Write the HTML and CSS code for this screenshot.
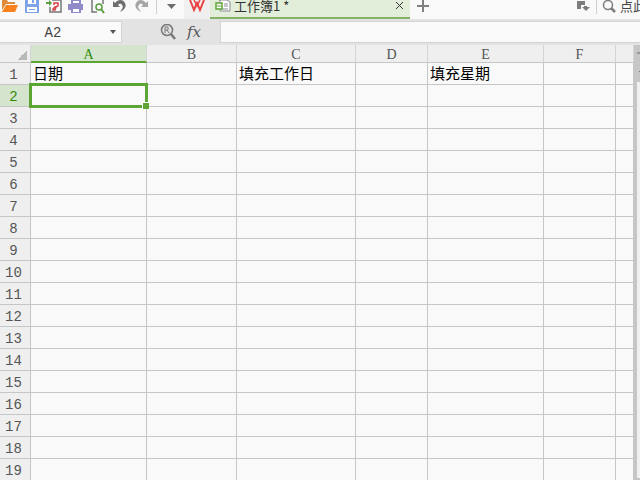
FILE: index.html
```html
<!DOCTYPE html>
<html lang="zh-CN">
<head>
    <meta charset="UTF-8">
    <meta name="viewport" content="width=device-width, initial-scale=1.0">
    <title>工作簿1</title>
    <link rel="stylesheet" href="styles.css">
</head>
<body>
    <header class="toolbar">
        <div class="quick-access">
            <button class="icon-button" aria-label="打开">
                <svg viewBox="0 0 16 16"><path d="M0 10V0h5l1 2h7v2H4z" fill="#e08a3c"/><path d="M4 5h12l-3 7H0z" fill="#f9821f"/></svg>
            </button>
            <button class="icon-button" aria-label="保存">
                <svg viewBox="0 0 16 16"><path d="M1 0h14v13H1z" fill="#7da3e8"/><path d="M4 0h8v4H4zM3 7h10v5H3z" fill="#fff"/><path d="M8 0h2v3H8zM5 9h6v1H5z" fill="#7da3e8"/></svg>
            </button>
            <button class="icon-button" aria-label="输出为PDF">
                <svg viewBox="0 0 16 16" fill="none"><path d="M6 0h9v12H4V7" stroke="#777" stroke-width="1.5"/><path d="M0 2h3V0l3 3-3 3V4H0z" fill="#5a9e3d"/><path d="M8 5V3h4v3L9 7 7 9v1h2l1-3" stroke="#d9434a" stroke-width="1.5"/></svg>
            </button>
            <button class="icon-button" aria-label="打印">
                <svg viewBox="0 0 16 16"><path d="M3 0h10v4h2v6H0V4h3z" fill="#8f8bc9"/><path d="M5 1h6v2H5z" fill="#fff"/><path d="M3 8h10v5H3z" fill="#8f8bc9"/><path d="M5 9h6v3H5z" fill="#fff"/></svg>
            </button>
            <button class="icon-button" aria-label="打印预览">
                <svg viewBox="0 0 16 16" fill="none"><path d="M7 12H2V0M13 0v4" stroke="#777" stroke-width="1.5"/><circle cx="9" cy="7" r="3" stroke="#5a9e3d" stroke-width="1.5"/><path d="M11 9l3 4" stroke="#5a9e3d" stroke-width="2"/></svg>
            </button>
            <button class="icon-button" aria-label="撤销">
                <svg viewBox="0 0 16 16"><path d="M1 1l2 2c3-4 8-4 10 0 2 4-1 7-5 9 2-3 4-5 2-7-1-2-3-1-4 0l2 2H1z" fill="#6e6e6e"/></svg>
            </button>
            <button class="icon-button" aria-label="恢复">
                <svg viewBox="0 0 16 16"><path d="M14 1l-2 2C9-1 4-1 2 3c-2 4 1 7 5 9-2-3-4-5-2-7 1-2 3-1 4 0L7 7h7z" fill="#a6a6a6"/></svg>
            </button>
            <span class="separator"></span>
            <button class="icon-button" aria-label="自定义">
                <svg viewBox="0 0 16 16"><path d="M4 4h9L8.5 9z" fill="#6e6e6e"/></svg>
            </button>
        </div>
        <button class="home-tab" aria-label="WPS">
            <svg viewBox="0 0 16 16" fill="none" stroke="#e94343" stroke-width="2"><path d="M1 0l4 10 3-7 3 7 4-10"/><path d="M5 0l3 6 3-6" stroke-width="1.5"/></svg>
        </button>
        <div class="doc-tab">
            <svg class="doc-icon" viewBox="0 0 16 16" fill="none"><path d="M4 0h8l3 2v9H5V0z" fill="#fff" stroke="#8b8b96"/><path d="M9 4h4M9 6h4M7 9h6" stroke="#8b8b96"/><path d="M1 3h6v6H1z" fill="#fff" stroke="#5ca532" stroke-width="1.5"/><path d="M2 6h4" stroke="#5ca532"/></svg>
            <span class="doc-title">工作簿1 *</span>
            <button class="close-button" aria-label="关闭">
                <svg viewBox="0 0 10 12"><path d="M1 2l7 7M8 2L1 9" stroke="#333"/></svg>
            </button>
        </div>
        <button class="icon-button new-tab" aria-label="新建">
            <svg viewBox="0 0 16 16"><path d="M2 5h12v2H2zM7 0h2v12H7z" fill="#808080"/></svg>
        </button>
        <div class="toolbar-right">
            <button class="icon-button" aria-label="切换窗口">
                <svg viewBox="0 0 16 16"><path d="M2 1h8v4H6v4H2z" fill="#7d7d7d"/><path d="M9 6h3v1h3l-4 4-4-4h2z" fill="#7d7d7d"/></svg>
            </button>
            <span class="separator"></span>
            <button class="search-button">
                <svg viewBox="0 0 16 16" fill="none" stroke="#7d7d7d"><circle cx="6" cy="5" r="4.5" stroke-width="1.5"/><path d="M9 8l4 4" stroke-width="2.5"/></svg>
                点此
            </button>
        </div>
    </header>

    <div class="formula-bar">
        <div class="name-box">
            <input type="text" value="A2" aria-label="名称框">
            <button class="name-arrow" aria-label="名称列表">
                <svg viewBox="0 0 6 4"><path d="M0 0h6L3 4z" fill="#555"/></svg>
            </button>
        </div>
        <div class="formula-tools">
            <button class="icon-button" aria-label="查找函数">
                <svg viewBox="0 0 16 16" fill="none" stroke="#777"><circle cx="7" cy="6" r="5.5" stroke-width="1.5"/><path d="M11 10l4 5" stroke-width="2.5"/><path d="M5 9V3h3v3H5M7 6l2 3"/></svg>
            </button>
            <button class="fx-button">fx</button>
        </div>
        <input type="text" class="formula-input" aria-label="编辑栏">
    </div>

    <main class="sheet">
        <table class="grid">
            <colgroup>
                <col class="col-row">
                <col class="col-a">
                <col class="col-b">
                <col class="col-c">
                <col class="col-d">
                <col class="col-e">
                <col class="col-f">
                <col>
            </colgroup>
            <thead>
                <tr>
                    <th class="corner"></th>
                    <th class="active">A</th>
                    <th>B</th>
                    <th>C</th>
                    <th>D</th>
                    <th>E</th>
                    <th>F</th>
                    <th></th>
                </tr>
            </thead>
            <tbody id="rows"></tbody>
        </table>
        <div class="scrollbar">
            <div class="scroll-head"></div>
            <div class="scroll-track"></div>
        </div>
    </main>

    <script>
        const ROW_COUNT = 19;
        const COLUMNS = ['A', 'B', 'C', 'D', 'E', 'F', 'G'];
        const cells = { A1: '日期', C1: '填充工作日', E1: '填充星期' };
        const selected = 'A2';

        const body = document.getElementById('rows');
        for (let r = 1; r <= ROW_COUNT; r++) {
            const row = body.insertRow();
            const head = document.createElement('th');
            head.textContent = r;
            if (selected === 'A' + r) {
                head.className = 'active';
            }
            row.appendChild(head);

            COLUMNS.forEach(function(col) {
                const cell = row.insertCell();
                cell.textContent = cells[col + r] || '';
                if (selected === col + r) {
                    cell.className = 'selected';
                }
            });
        }
    </script>
</body>
</html>
```

FILE: styles.css
```css
* {
    box-sizing: border-box;
}
body {
    margin: 0;
    height: 100vh;
    display: flex;
    flex-direction: column;
    overflow: hidden;
    background-color: #f9f9f9;
    font-family: "Noto Sans CJK SC", sans-serif;
    color: #000;
}
button {
    border: none;
    padding: 0;
    background: none;
    color: #444;
    font-family: inherit;
    cursor: pointer;
}
svg {
    display: block;
    flex: none;
}

/* Toolbar and tabs */
.toolbar {
    display: flex;
    flex: none;
    height: 19px;
    overflow: hidden;
}
.quick-access {
    display: flex;
    gap: 6px;
    padding: 0 5px 0 2px;
}
.icon-button,
.icon-button svg {
    width: 16px;
    height: 16px;
}
.separator {
    flex: none;
    width: 1px;
    height: 14px;
    background-color: #d0d0d0;
}
.home-tab {
    display: flex;
    justify-content: center;
    width: 26px;
    background-color: #f0f0f0;
}
.home-tab svg {
    width: 16px;
    height: 16px;
}
.doc-tab {
    display: flex;
    gap: 3px;
    width: 200px;
    padding: 0 5px;
    background-color: #e2eeda;
    border-bottom: 2px solid #82b366;
}
.doc-icon {
    width: 16px;
    height: 16px;
}
.doc-title {
    flex: 1;
    font-size: 13px;
    line-height: 12px;
    color: #333;
}
.close-button,
.close-button svg {
    width: 10px;
    height: 12px;
}
.new-tab {
    margin-left: 5px;
}
.toolbar-right {
    display: flex;
    gap: 5px;
    width: 65px;
    margin-left: auto;
}
.toolbar-right .icon-button {
    flex: none;
}
.search-button {
    display: flex;
    gap: 2px;
    height: 14px;
    font-size: 13px;
    line-height: 12px;
    white-space: nowrap;
}
.search-button svg {
    width: 16px;
    height: 16px;
}

/* Formula bar */
.formula-bar {
    display: flex;
    flex: none;
    height: 26px;
    padding: 2px 0;
    background-color: #e3e3e4;
}
.formula-bar input {
    min-width: 0;
    border: none;
    outline: none;
    background: none;
}
.name-box {
    display: flex;
    width: 122px;
    background-color: #fafafa;
    border: 1px solid #d4d4d4;
    border-left: none;
}
.name-box input {
    flex: 1;
    padding: 2px 0 0;
    text-align: center;
    font-family: "Liberation Mono", monospace;
    font-size: 14px;
    color: #444;
}
.name-arrow {
    display: flex;
    align-items: center;
    width: 15px;
    padding: 0 5px 0 4px;
}
.name-arrow svg {
    width: 6px;
    height: 4px;
}
.formula-tools {
    display: flex;
    align-items: center;
    justify-content: flex-end;
    gap: 10px;
    width: 98px;
    padding-right: 18px;
}
.fx-button {
    width: 16px;
    font-family: "DejaVu Serif", serif;
    font-size: 15px;
    line-height: 20px;
    font-style: italic;
    color: #555;
}
.formula-bar .formula-input {
    flex: 1;
    border: 1px solid #d4d4d4;
    border-right: none;
    background-color: #fafafa;
}

/* Sheet */
.sheet {
    display: flex;
    flex: 1;
    min-height: 0;
    overflow: hidden;
}
.grid {
    flex: 1;
    align-self: flex-start;
    width: 100%;
    table-layout: fixed;
    border-collapse: separate;
    border-spacing: 0;
}
.col-row {
    width: 31px;
}
.col-a,
.col-e {
    width: 116px;
}
.col-b {
    width: 90px;
}
.col-c {
    width: 119px;
}
.col-d,
.col-f {
    width: 72px;
}
th,
td {
    height: 22px;
    padding: 0;
    border-right: 1px solid #c6c6c6;
    border-bottom: 1px solid #c6c6c6;
}
th {
    background-color: #efefef;
    font-weight: normal;
    color: #555;
}
thead th {
    height: 18px;
    padding-top: 3px;
    font-family: "Liberation Serif", serif;
    font-size: 14px;
    line-height: 14px;
    border-right-color: #d4d4d4;
}
tbody th {
    padding: 2px 3px 0 0;
    font-family: "Liberation Mono", monospace;
    font-size: 14px;
    line-height: 18px;
}
th.active {
    background-color: #d5e5cd;
    color: #2f8a0c;
}
thead th.active {
    border-bottom: 2px solid #5ca532;
    line-height: 13px;
}
.corner {
    background-image: linear-gradient(135deg, transparent 50%, #b9b9b9 50%);
    background-size: 10px 10px;
    background-position: 17px 5px;
    background-repeat: no-repeat;
}
td {
    padding: 0 0 2px 2px;
    font-size: 15px;
    line-height: 19px;
    white-space: nowrap;
}
td.selected {
    position: relative;
}
td.selected::before {
    content: "";
    position: absolute;
    inset: -2px;
    border: 3px solid #5ca532;
}
td.selected::after {
    content: "";
    position: absolute;
    right: -3px;
    bottom: -3px;
    width: 6px;
    height: 6px;
    background-color: #5ca532;
    border-top: 1px solid #fff;
    border-left: 1px solid #fff;
}
.scrollbar {
    display: flex;
    flex-direction: column;
    flex: none;
    width: 6px;
    background-color: #c6c6c6;
    padding-bottom: 2px;
}
.scroll-head {
    height: 37px;
    margin-left: 3px;
    background-image: linear-gradient(#999, #999), linear-gradient(#777, #777);
    background-size: 3px 2px, 2px 1px;
    background-position: 0 7px, 2px 26px;
    background-repeat: no-repeat;
}
.scroll-track {
    flex: 1;
    margin-left: 3px;
    background-color: #f0f0f0;
}
```
